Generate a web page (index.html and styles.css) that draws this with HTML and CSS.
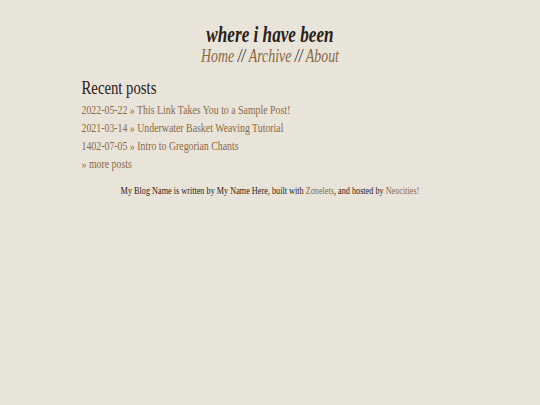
FILE: index.html
```html
<!DOCTYPE html>
<html>
<head>
<meta charset="utf-8">
<title>where i have been</title>
<link rel="stylesheet" href="styles.css">
</head>
<body>
<div class="page">
  <header class="site-header">
    <h1 class="site-title">where i have been</h1>
    <nav class="site-nav"><a href="#">Home</a> // <a href="#">Archive</a> // <a href="#">About</a></nav>
  </header>
  <main class="content">
    <h2 class="section-title">Recent posts</h2>
    <ul class="post-list">
      <li><a href="#">2022-05-22 » This Link Takes You to a Sample Post!</a></li>
      <li><a href="#">2021-03-14 » Underwater Basket Weaving Tutorial</a></li>
      <li><a href="#">1402-07-05 » Intro to Gregorian Chants</a></li>
      <li><a href="#">» more posts</a></li>
    </ul>
  </main>
  <footer class="site-footer">My Blog Name is written by My Name Here, built with <a href="#">Zonelets</a>, and hosted by <a href="#">Neocities!</a></footer>
</div>
</body>
</html>
```
FILE: styles.css
```css
html, body {
  margin: 0;
  padding: 0;
  background: #e9e4da;
}
body {
  font-family: "Liberation Serif", "DejaVu Serif", serif;
  color: #2a2119;
}
a {
  color: #8a6943;
  text-decoration: none;
}
.page {
  width: 496px;
  margin: 0 auto;
  padding-top: 24px;
  transform: scaleX(0.76);
  transform-origin: 50% 0;
}
.site-header {
  text-align: center;
}
.site-title {
  margin: 0;
  font-size: 22.6px;
  line-height: 22px;
  font-style: italic;
  font-weight: bold;
  color: #2a2119;
}
.site-nav {
  font-size: 18.3px;
  line-height: 20px;
  font-style: italic;
  color: #2a2119;
}
.content {
  margin-top: 10px;
}
.section-title {
  margin: 0 0 1px 0;
  font-size: 19.4px;
  line-height: 24px;
  font-weight: normal;
}
.post-list {
  list-style: none;
  margin: 0;
  padding: 0;
}
.post-list li {
  font-size: 12.95px;
  line-height: 18px;
}
.site-footer {
  margin-top: 10px;
  text-align: center;
  font-size: 10.8px;
  line-height: 14px;
}
```
